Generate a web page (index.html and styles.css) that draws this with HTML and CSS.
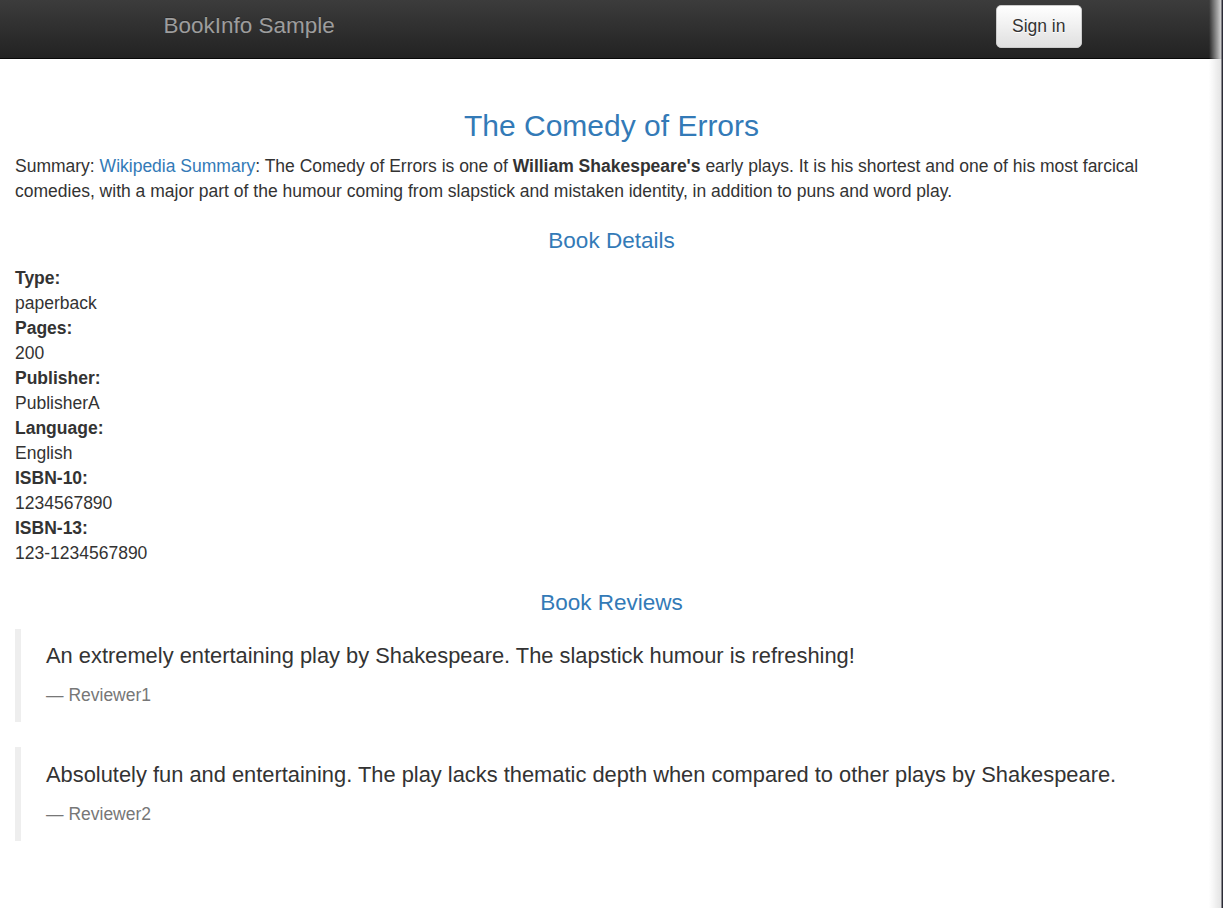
FILE: index.html
```html
<!DOCTYPE html>
<html lang="en">
<head>
<meta charset="utf-8">
<title>Simple Bookstore App</title>
<link rel="stylesheet" href="styles.css">
</head>
<body>
<nav class="navbar">
  <div class="navbar-inner">
    <a class="brand" href="#">BookInfo Sample</a>
    <button class="btn-signin" type="button">Sign in</button>
  </div>
</nav>
<main class="content">
  <h3 class="book-title">The Comedy of Errors</h3>
  <p class="summary">Summary: <a href="#">Wikipedia Summary</a>: The Comedy of Errors is one of <b>William Shakespeare's</b> early plays. It is his shortest and one of his most farcical comedies, with a major part of the humour coming from slapstick and mistaken identity, in addition to puns and word play.</p>

  <h4 class="section-title">Book Details</h4>
  <dl class="details">
    <dt>Type:</dt><dd>paperback</dd>
    <dt>Pages:</dt><dd>200</dd>
    <dt>Publisher:</dt><dd>PublisherA</dd>
    <dt>Language:</dt><dd>English</dd>
    <dt>ISBN-10:</dt><dd>1234567890</dd>
    <dt>ISBN-13:</dt><dd>123-1234567890</dd>
  </dl>

  <h4 class="section-title">Book Reviews</h4>
  <blockquote class="review">
    <p>An extremely entertaining play by Shakespeare. The slapstick humour is refreshing!</p>
    <footer>Reviewer1</footer>
  </blockquote>
  <blockquote class="review">
    <p>Absolutely fun and entertaining. The play lacks thematic depth when compared to other plays by Shakespeare.</p>
    <footer>Reviewer2</footer>
  </blockquote>
</main>
</body>
</html>
```
FILE: styles.css
```css
* { box-sizing: border-box; }

html, body {
  margin: 0;
  padding: 0;
}

body {
  font-family: "Liberation Sans", Arial, Helvetica, sans-serif;
  font-size: 17.5px;
  line-height: 25px;
  color: #333;
  background: #fff;
}

body::after {
  content: "";
  position: fixed;
  top: 0;
  right: 0;
  bottom: 0;
  width: 14px;
  background: linear-gradient(to right, rgba(230,230,230,0) 0, rgba(225,225,225,0.9) 12px, #2b2b36 13px, #2b2b36 14px);
  pointer-events: none;
}

.navbar {
  height: 59px;
  background-image: linear-gradient(to bottom, #3c3c3c 0, #222 100%);
  border-bottom: 1px solid #080808;
}

.navbar-inner {
  width: 938px;
  margin: 0 auto;
  padding: 0 0 0 20px;
  display: flex;
  justify-content: space-between;
  align-items: flex-start;
  transform: translateX(1px);
}

.brand {
  display: block;
  margin-top: 13px;
  font-size: 22.5px;
  line-height: 25px;
  color: #9d9d9d;
  text-decoration: none;
  text-shadow: 0 -1px 0 rgba(0,0,0,.25);
}

.btn-signin {
  margin-top: 5px;
  height: 42.5px;
  padding: 0 15px;
  font-family: inherit;
  font-size: 17.5px;
  line-height: 25px;
  color: #333;
  background-image: linear-gradient(to bottom, #fff 0, #e0e0e0 100%);
  border: 1.25px solid #ccc;
  border-radius: 5px;
  text-shadow: 0 1px 0 #fff;
  box-shadow: inset 0 1px 0 rgba(255,255,255,.15), 0 1px 1px rgba(0,0,0,.075);
  cursor: pointer;
}

.content {
  padding: 50px 15px 40px;
}

.book-title {
  margin: 0 0 12px;
  text-align: center;
  font-size: 30px;
  line-height: 33px;
  font-weight: normal;
  color: #337ab7;
}

.summary {
  margin: 0;
}

.summary a {
  color: #337ab7;
  text-decoration: none;
}

.summary b { font-weight: bold; }

.section-title {
  margin: 25px 0 12.5px;
  text-align: center;
  font-size: 22.5px;
  line-height: 24.75px;
  font-weight: normal;
  color: #337ab7;
}

.details {
  margin: 0;
}

.details dt {
  font-weight: bold;
}

.details dd {
  margin: 0;
}

.review {
  margin: 0 0 25px;
  padding: 11.5px 25px 14px;
  border-left: 6.25px solid #eee;
  font-size: 21.875px;
  line-height: 31.25px;
}

.review p {
  margin: 0 0 12px;
}

.review footer {
  font-size: 17.5px;
  line-height: 25px;
  color: #777;
}

.review footer::before {
  content: "\2014 \00A0";
}
```
